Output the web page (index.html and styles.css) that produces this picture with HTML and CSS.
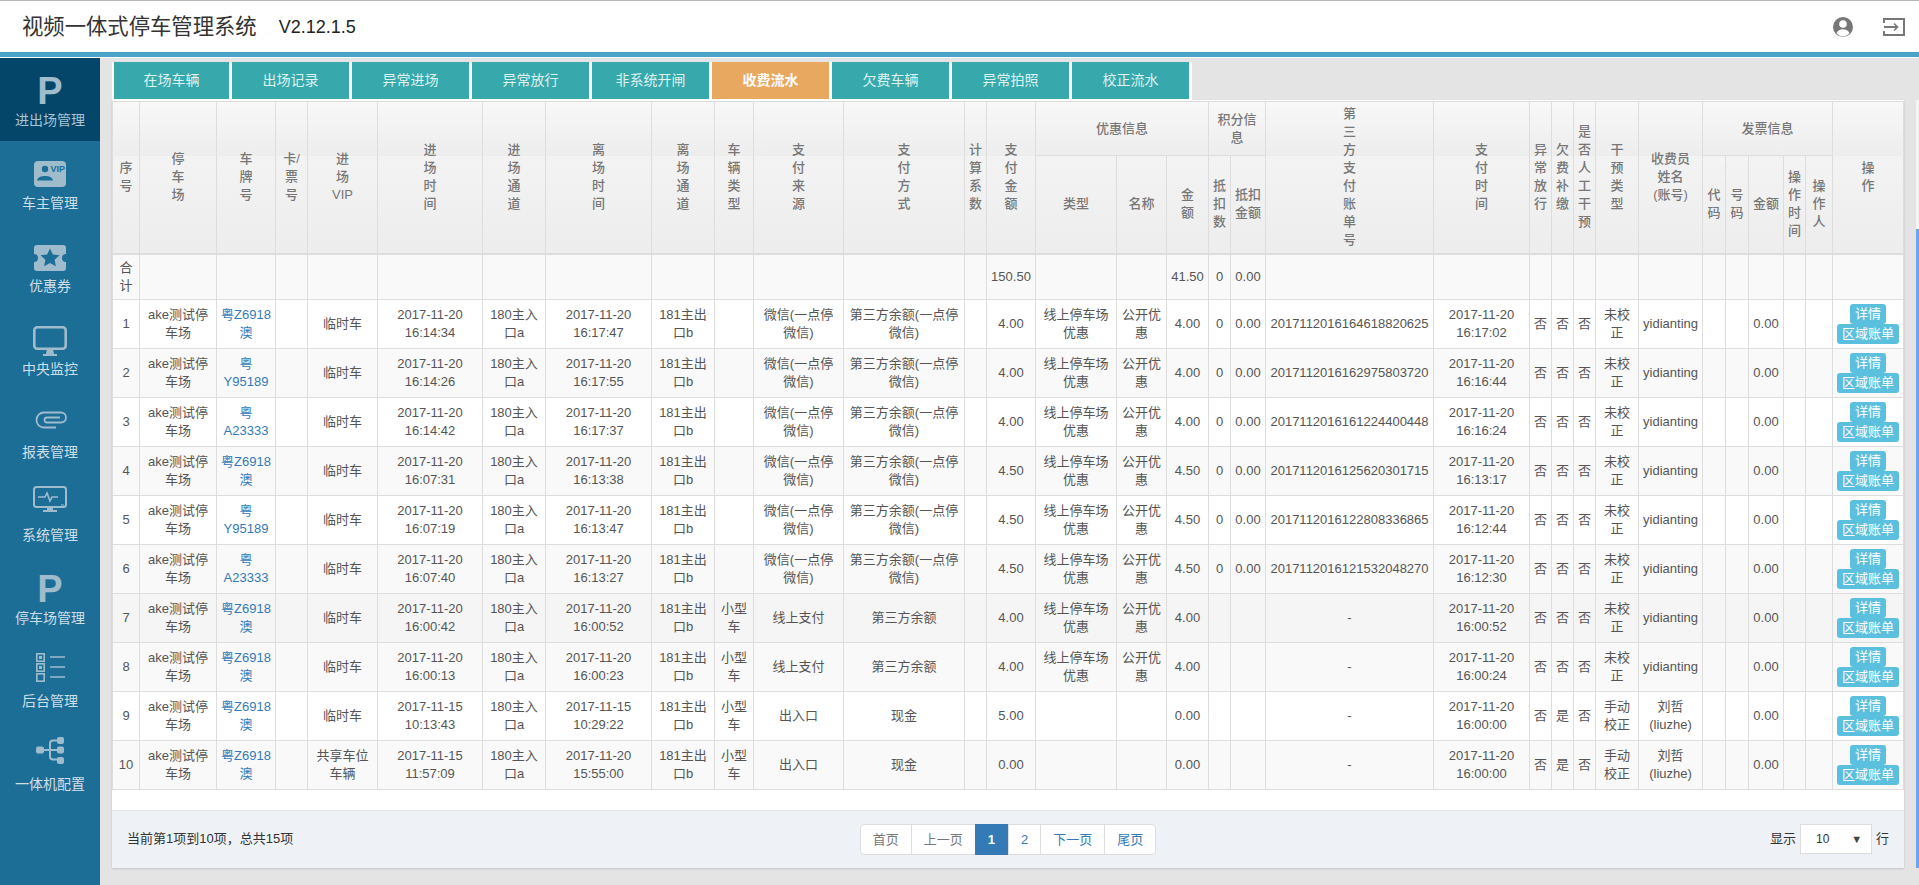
FILE: index.html
```html
<!DOCTYPE html>
<html lang="zh-CN">
<head>
    <meta charset="UTF-8">
    <title>视频一体式停车管理系统</title>
    <link rel="stylesheet" href="styles.css">
</head>
<body>
    <header class="topbar">
        <h1 class="brand">视频一体式停车管理系统</h1>
        <span class="version">V2.12.1.5</span>
        <div class="top-icons">
            <svg class="icon-user" width="20" height="20" viewBox="0 0 20 20"><circle cx="10" cy="10" r="10" fill="#777"/><circle cx="10" cy="7" r="3.8" fill="#fff"/><path d="M3.6 16.2c1-3 3.600-4 6.400-4s5.400 1 6.400 4c-1.600 2-3.800 3.200-6.400 3.200s-4.800-1.200-6.400-3.200z" fill="#fff"/></svg>
            <svg class="icon-exit" width="22" height="18" viewBox="0 0 22 18" fill="none" stroke="#777" stroke-width="2"><path d="M1 5V1h20v16H1v-4"/><path d="M1 9h13"/><path d="M11 5.500 14.500 9 11 12.500" stroke-width="1.600"/></svg>
        </div>
    </header>
    <div class="layout">
        <nav class="sidebar">
            <a class="nav-item active">
                <span class="nav-letter">P</span>
                <span>进出场管理</span>
            </a>
            <a class="nav-item">
                <svg class="nav-icon" viewBox="0 0 40 52"><rect x="4" y="20" width="32" height="26" rx="4" class="fill"/><circle cx="15" cy="28" r="3.200" class="cut"/><path d="M7 39.500c1-3.500 4-4.500 8-4.500s7 1 8 4.500z" class="cut"/><text x="20.500" y="31" class="icon-vip">VIP</text></svg>
                <span>车主管理</span>
            </a>
            <a class="nav-item">
                <svg class="nav-icon" viewBox="0 0 40 52"><path d="M7 21h26a3 3 0 0 1 3 3v6a4 4 0 0 0 0 8v6a3 3 0 0 1-3 3H7a3 3 0 0 1-3-3v-6a4 4 0 0 0 0-8v-6a3 3 0 0 1 3-3z" class="fill"/><path d="m20 24.500 2.900 6 6.600.8-4.900 4.500 1.300 6.500-5.900-3.300-5.900 3.300 1.300-6.500-4.900-4.500 6.600-.8z" class="cut"/></svg>
                <span>优惠券</span>
            </a>
            <a class="nav-item">
                <svg class="nav-icon" viewBox="0 0 40 52"><rect x="4.300" y="20.300" width="31.400" height="21.400" rx="3" class="line line-thick"/><path d="M17 42h6l1 5h3v2H13v-2h3z" class="fill"/></svg>
                <span>中央监控</span>
            </a>
            <a class="nav-item">
                <svg class="nav-icon" viewBox="0 0 40 52"><path d="M26 37.500H14a7.500 7.500 0 0 1 0-15h17a5 5 0 0 1 0 10H17a2.500 2.500 0 0 1 0-5h13" class="line line-clip"/></svg>
                <span>报表管理</span>
            </a>
            <a class="nav-item">
                <svg class="nav-icon" viewBox="0 0 40 52"><rect x="4" y="14" width="32" height="20" rx="2.500" class="line"/><path d="M8 24h7l2-4 3 8 2-4h6" class="line line-thin"/><path d="M31 31.500h3v1h-3z" class="fill"/><path d="M17 34h6v3h4v2H13v-2h4z" class="fill"/></svg>
                <span>系统管理</span>
            </a>
            <a class="nav-item">
                <span class="nav-letter">P</span>
                <span>停车场管理</span>
            </a>
            <a class="nav-item">
                <svg class="nav-icon" viewBox="0 0 40 52"><rect x="6.800" y="14.800" width="7.400" height="7.400" class="line line-thin"/><rect x="9" y="17" width="3" height="3" class="fill"/><rect x="6.800" y="24.800" width="7.400" height="7.400" class="line line-thin"/><rect x="9" y="27" width="3" height="3" class="fill"/><rect x="6.800" y="34.800" width="7.400" height="7.400" class="line line-thin"/><path d="M20 18h15M20 28h15M20 38h15" class="line line-thin"/></svg>
                <span>后台管理</span>
            </a>
            <a class="nav-item">
                <svg class="nav-icon" viewBox="0 0 40 52"><rect x="6" y="24.500" width="8" height="7" rx="2" class="fill"/><rect x="27" y="15" width="7" height="7" rx="2" class="fill"/><rect x="27" y="24.500" width="7" height="7" rx="2" class="fill"/><rect x="27" y="35" width="7" height="7" rx="2" class="fill"/><path d="M13 28h14M28 18.500h-5a3 3 0 0 0-3 3v13a3 3 0 0 0 3 3h5" class="line"/></svg>
                <span>一体机配置</span>
            </a>
        </nav>
        <main class="main">
            <ul class="tabs">
                <li>在场车辆</li>
                <li>出场记录</li>
                <li>异常进场</li>
                <li>异常放行</li>
                <li>非系统开闸</li>
                <li class="current">收费流水</li>
                <li>欠费车辆</li>
                <li>异常拍照</li>
                <li>校正流水</li>
            </ul>
            <section class="panel">
                <table class="data-table">
                    <colgroup>
                        <col class="w27"><col class="w77"><col class="w59"><col class="w32"><col class="w70"><col class="w105"><col class="w63"><col class="w106"><col class="w63"><col class="w39"><col class="w90"><col class="w121"><col class="w22"><col class="w49"><col class="w81"><col class="w50"><col class="w42"><col class="w22"><col class="w35"><col class="w168"><col class="w96"><col class="w22"><col class="w22"><col class="w22"><col class="w43"><col class="w64"><col class="w23"><col class="w23"><col class="w35"><col class="w22"><col class="w27"><col class="w71">
                    </colgroup>
                    <thead>
                        <tr class="head-top">
                            <th rowspan="2">序<br>号</th><th rowspan="2">停<br>车<br>场</th><th rowspan="2">车<br>牌<br>号</th><th rowspan="2">卡/<br>票<br>号</th><th rowspan="2">进<br>场<br>VIP</th><th rowspan="2">进<br>场<br>时<br>间</th><th rowspan="2">进<br>场<br>通<br>道</th><th rowspan="2">离<br>场<br>时<br>间</th><th rowspan="2">离<br>场<br>通<br>道</th><th rowspan="2">车<br>辆<br>类<br>型</th><th rowspan="2">支<br>付<br>来<br>源</th><th rowspan="2">支<br>付<br>方<br>式</th><th rowspan="2">计<br>算<br>系<br>数</th><th rowspan="2">支<br>付<br>金<br>额</th>
                            <th colspan="3">优惠信息</th><th colspan="2">积分信<br>息</th>
                            <th rowspan="2">第<br>三<br>方<br>支<br>付<br>账<br>单<br>号</th><th rowspan="2">支<br>付<br>时<br>间</th><th rowspan="2">异<br>常<br>放<br>行</th><th rowspan="2">欠<br>费<br>补<br>缴</th><th rowspan="2">是<br>否<br>人<br>工<br>干<br>预</th><th rowspan="2">干<br>预<br>类<br>型</th><th rowspan="2">收费员<br>姓名<br>(账号)</th>
                            <th colspan="5">发票信息</th><th rowspan="2">操<br>作</th>
                        </tr>
                        <tr class="head-sub">
                            <th>类型</th><th>名称</th><th>金<br>额</th><th>抵<br>扣<br>数</th><th>抵扣<br>金额</th><th>代<br>码</th><th>号<br>码</th><th>金额</th><th>操<br>作<br>时<br>间</th><th>操<br>作<br>人</th>
                        </tr>
                    </thead>
                    <tbody>
                        <tr class="total"><td>合计</td><td></td><td></td><td></td><td></td><td></td><td></td><td></td><td></td><td></td><td></td><td></td><td></td><td>150.50</td><td></td><td></td><td>41.50</td><td>0</td><td>0.00</td><td></td><td></td><td></td><td></td><td></td><td></td><td></td><td></td><td></td><td></td><td></td><td></td><td></td></tr>
                        <tr><td>1</td><td>ake测试停车场</td><td><a>粤Z6918澳</a></td><td></td><td>临时车</td><td>2017-11-20 16:14:34</td><td>180主入口a</td><td>2017-11-20 16:17:47</td><td>181主出口b</td><td></td><td>微信(一点停微信)</td><td>第三方余额(一点停微信)</td><td></td><td>4.00</td><td>线上停车场优惠</td><td>公开优惠</td><td>4.00</td><td>0</td><td>0.00</td><td>2017112016164618820625</td><td>2017-11-20 16:17:02</td><td>否</td><td>否</td><td>否</td><td>未校正</td><td>yidianting</td><td></td><td></td><td>0.00</td><td></td><td></td><td><button class="btn">详情</button><button class="btn">区域账单</button></td></tr>
                        <tr><td>2</td><td>ake测试停车场</td><td><a>粤Y95189</a></td><td></td><td>临时车</td><td>2017-11-20 16:14:26</td><td>180主入口a</td><td>2017-11-20 16:17:55</td><td>181主出口b</td><td></td><td>微信(一点停微信)</td><td>第三方余额(一点停微信)</td><td></td><td>4.00</td><td>线上停车场优惠</td><td>公开优惠</td><td>4.00</td><td>0</td><td>0.00</td><td>2017112016162975803720</td><td>2017-11-20 16:16:44</td><td>否</td><td>否</td><td>否</td><td>未校正</td><td>yidianting</td><td></td><td></td><td>0.00</td><td></td><td></td><td><button class="btn">详情</button><button class="btn">区域账单</button></td></tr>
                        <tr><td>3</td><td>ake测试停车场</td><td><a>粤A23333</a></td><td></td><td>临时车</td><td>2017-11-20 16:14:42</td><td>180主入口a</td><td>2017-11-20 16:17:37</td><td>181主出口b</td><td></td><td>微信(一点停微信)</td><td>第三方余额(一点停微信)</td><td></td><td>4.00</td><td>线上停车场优惠</td><td>公开优惠</td><td>4.00</td><td>0</td><td>0.00</td><td>2017112016161224400448</td><td>2017-11-20 16:16:24</td><td>否</td><td>否</td><td>否</td><td>未校正</td><td>yidianting</td><td></td><td></td><td>0.00</td><td></td><td></td><td><button class="btn">详情</button><button class="btn">区域账单</button></td></tr>
                        <tr><td>4</td><td>ake测试停车场</td><td><a>粤Z6918澳</a></td><td></td><td>临时车</td><td>2017-11-20 16:07:31</td><td>180主入口a</td><td>2017-11-20 16:13:38</td><td>181主出口b</td><td></td><td>微信(一点停微信)</td><td>第三方余额(一点停微信)</td><td></td><td>4.50</td><td>线上停车场优惠</td><td>公开优惠</td><td>4.50</td><td>0</td><td>0.00</td><td>2017112016125620301715</td><td>2017-11-20 16:13:17</td><td>否</td><td>否</td><td>否</td><td>未校正</td><td>yidianting</td><td></td><td></td><td>0.00</td><td></td><td></td><td><button class="btn">详情</button><button class="btn">区域账单</button></td></tr>
                        <tr><td>5</td><td>ake测试停车场</td><td><a>粤Y95189</a></td><td></td><td>临时车</td><td>2017-11-20 16:07:19</td><td>180主入口a</td><td>2017-11-20 16:13:47</td><td>181主出口b</td><td></td><td>微信(一点停微信)</td><td>第三方余额(一点停微信)</td><td></td><td>4.50</td><td>线上停车场优惠</td><td>公开优惠</td><td>4.50</td><td>0</td><td>0.00</td><td>2017112016122808336865</td><td>2017-11-20 16:12:44</td><td>否</td><td>否</td><td>否</td><td>未校正</td><td>yidianting</td><td></td><td></td><td>0.00</td><td></td><td></td><td><button class="btn">详情</button><button class="btn">区域账单</button></td></tr>
                        <tr><td>6</td><td>ake测试停车场</td><td><a>粤A23333</a></td><td></td><td>临时车</td><td>2017-11-20 16:07:40</td><td>180主入口a</td><td>2017-11-20 16:13:27</td><td>181主出口b</td><td></td><td>微信(一点停微信)</td><td>第三方余额(一点停微信)</td><td></td><td>4.50</td><td>线上停车场优惠</td><td>公开优惠</td><td>4.50</td><td>0</td><td>0.00</td><td>2017112016121532048270</td><td>2017-11-20 16:12:30</td><td>否</td><td>否</td><td>否</td><td>未校正</td><td>yidianting</td><td></td><td></td><td>0.00</td><td></td><td></td><td><button class="btn">详情</button><button class="btn">区域账单</button></td></tr>
                        <tr class="hover"><td>7</td><td>ake测试停车场</td><td><a>粤Z6918澳</a></td><td></td><td>临时车</td><td>2017-11-20 16:00:42</td><td>180主入口a</td><td>2017-11-20 16:00:52</td><td>181主出口b</td><td>小型车</td><td>线上支付</td><td>第三方余额</td><td></td><td>4.00</td><td>线上停车场优惠</td><td>公开优惠</td><td>4.00</td><td></td><td></td><td>-</td><td>2017-11-20 16:00:52</td><td>否</td><td>否</td><td>否</td><td>未校正</td><td>yidianting</td><td></td><td></td><td>0.00</td><td></td><td></td><td><button class="btn">详情</button><button class="btn">区域账单</button></td></tr>
                        <tr><td>8</td><td>ake测试停车场</td><td><a>粤Z6918澳</a></td><td></td><td>临时车</td><td>2017-11-20 16:00:13</td><td>180主入口a</td><td>2017-11-20 16:00:23</td><td>181主出口b</td><td>小型车</td><td>线上支付</td><td>第三方余额</td><td></td><td>4.00</td><td>线上停车场优惠</td><td>公开优惠</td><td>4.00</td><td></td><td></td><td>-</td><td>2017-11-20 16:00:24</td><td>否</td><td>否</td><td>否</td><td>未校正</td><td>yidianting</td><td></td><td></td><td>0.00</td><td></td><td></td><td><button class="btn">详情</button><button class="btn">区域账单</button></td></tr>
                        <tr><td>9</td><td>ake测试停车场</td><td><a>粤Z6918澳</a></td><td></td><td>临时车</td><td>2017-11-15 10:13:43</td><td>180主入口a</td><td>2017-11-15 10:29:22</td><td>181主出口b</td><td>小型车</td><td>出入口</td><td>现金</td><td></td><td>5.00</td><td></td><td></td><td>0.00</td><td></td><td></td><td>-</td><td>2017-11-20 16:00:00</td><td>否</td><td>是</td><td>否</td><td>手动校正</td><td>刘哲<br>(liuzhe)</td><td></td><td></td><td>0.00</td><td></td><td></td><td><button class="btn">详情</button><button class="btn">区域账单</button></td></tr>
                        <tr><td>10</td><td>ake测试停车场</td><td><a>粤Z6918澳</a></td><td></td><td>共享车位车辆</td><td>2017-11-15 11:57:09</td><td>180主入口a</td><td>2017-11-20 15:55:00</td><td>181主出口b</td><td>小型车</td><td>出入口</td><td>现金</td><td></td><td>0.00</td><td></td><td></td><td>0.00</td><td></td><td></td><td>-</td><td>2017-11-20 16:00:00</td><td>否</td><td>是</td><td>否</td><td>手动校正</td><td>刘哲<br>(liuzhe)</td><td></td><td></td><td>0.00</td><td></td><td></td><td><button class="btn">详情</button><button class="btn">区域账单</button></td></tr>
                    </tbody>
                </table>
                <footer class="table-foot">
                    <div class="page-info">当前第1项到10项，总共15项</div>
                    <ul class="pagination">
                        <li class="off">首页</li>
                        <li class="off">上一页</li>
                        <li class="on">1</li>
                        <li>2</li>
                        <li>下一页</li>
                        <li>尾页</li>
                    </ul>
                    <div class="page-size">
                        <span>显示</span>
                        <div class="size-select"><span>10</span><i>▼</i></div>
                        <span>行</span>
                    </div>
                </footer>
            </section>
        </main>
    </div>
    <div class="scroll-track"><div class="scroll-thumb"></div></div>
</body>
</html>
```

FILE: styles.css
```css
* {
    box-sizing: border-box;
}
html, body {
    height: 885px;
    margin: 0;
    overflow: hidden;
}
body {
    background-color: #e4e4e4;
    color: #333;
    font: 13px/18px "Liberation Sans", "Noto Sans CJK SC", sans-serif;
}
ul {
    list-style: none;
    margin: 0;
    padding: 0;
}

/* top bar */
.topbar {
    display: flex;
    align-items: center;
    height: 58px;
    padding: 0 14px 5px 22px;
    background-color: #fff;
    border-top: 1px solid #b8b8b8;
    border-bottom: 1px solid #fff;
    box-shadow: inset 0 -5px 0 #4ba3c7;
}
.brand {
    margin: 0;
    font-size: 21.33px;
    font-weight: normal;
    line-height: 28px;
}
.version {
    margin-left: 22px;
    font-size: 18px;
    color: #222;
}
.top-icons {
    display: flex;
    align-items: center;
    gap: 30px;
    margin-left: auto;
}

/* left menu */
.layout {
    display: flex;
    height: 827px;
}
.sidebar {
    flex: 0 0 100px;
    background-color: #1c6e97;
}
.nav-item {
    display: block;
    height: 83px;
    text-align: center;
    font-size: 14px;
    line-height: 20px;
    color: #cfdfe8;
}
.nav-item.active {
    background-color: #03466a;
    color: #a9c4d4;
}
.nav-icon {
    display: block;
    width: 40px;
    height: 52px;
    margin: 0 auto;
}
.nav-letter {
    display: block;
    height: 52px;
    padding-top: 15px;
    color: #9fbccd;
    font-size: 38px;
    font-weight: bold;
    line-height: 37px;
}
.nav-icon .fill {
    fill: #9fbccd;
}
.nav-icon .cut {
    fill: #1c6e97;
}
.nav-icon .line {
    fill: none;
    stroke: #9fbccd;
    stroke-width: 2;
}
.nav-icon .line-thick {
    stroke-width: 2.6;
}
.nav-icon .line-clip {
    stroke-width: 1.8;
}
.nav-icon .line-thin {
    stroke-width: 1.6;
}
.icon-vip {
    fill: #1c6e97;
    font: bold 9px "Liberation Sans", sans-serif;
}

/* content */
.main {
    flex: 1;
    padding: 4px 15px 0 12px;
}
.tabs {
    display: inline-flex;
    gap: 3px;
    height: 38px;
    padding: 0 3px 1px 2px;
    background-color: #fff;
    vertical-align: top;
}
.tabs li {
    width: 117px;
    background-color: #37a9ad;
    color: #dff1f1;
    font-size: 14px;
    line-height: 37px;
    text-align: center;
}
.tabs li:first-child {
    width: 115px;
}
.tabs li.current {
    background-color: #e9a85f;
    color: #fff;
    font-weight: bold;
}
.panel {
    background-color: #fff;
    padding-top: 1px;
    box-shadow: 0 1px 2px rgba(0, 0, 0, 0.15);
}

/* table */
.data-table {
    width: 1792px;
    border-collapse: collapse;
    table-layout: fixed;
    color: #555;
    text-align: center;
}
.data-table th,
.data-table td {
    padding: 4px;
    border: 1px solid #ddd;
    vertical-align: middle;
}
.data-table th {
    padding: 0;
    color: #777;
    font-weight: 500;
}
.data-table thead {
    border-bottom: 2px solid #ddd;
}
.head-top {
    height: 54px;
}
.head-sub {
    height: 98px;
}
.head-top th {
    background: linear-gradient(#f8f8f8, #ededed) 0 0 / 100% 54px no-repeat,
                linear-gradient(#f3f3f3, #ededed) 0 54px / 100% 98px no-repeat;
}
.head-sub th {
    background: linear-gradient(#f3f3f3, #ededed);
}
.data-table tbody tr {
    height: 49px;
}
.data-table tbody tr.total {
    height: 44px;
}
.data-table tbody tr:nth-child(odd) {
    background-color: #f9f9f9;
}
.data-table tbody tr.hover {
    background-color: #f5f5f5;
}
.data-table a {
    color: #337ab7;
}
.btn {
    display: block;
    height: 20px;
    margin: 0 auto;
    padding: 0 5px;
    border: 0;
    border-radius: 3px;
    background-color: #5bc0de;
    color: #fff;
    font: inherit;
    line-height: 20px;
    white-space: nowrap;
}
.w22 { width: 22px; }
.w23 { width: 23px; }
.w27 { width: 27px; }
.w32 { width: 32px; }
.w35 { width: 35px; }
.w39 { width: 39px; }
.w42 { width: 42px; }
.w43 { width: 43px; }
.w49 { width: 49px; }
.w50 { width: 50px; }
.w59 { width: 59px; }
.w63 { width: 63px; }
.w64 { width: 64px; }
.w70 { width: 70px; }
.w71 { width: 71px; }
.w77 { width: 77px; }
.w81 { width: 81px; }
.w90 { width: 90px; }
.w96 { width: 96px; }
.w105 { width: 105px; }
.w106 { width: 106px; }
.w121 { width: 121px; }
.w168 { width: 168px; }

/* table footer */
.table-foot {
    display: grid;
    grid-template-columns: 1fr auto 1fr;
    align-items: center;
    height: 58px;
    margin-top: 20px;
    padding: 0 15px;
    background-color: #eef2f7;
    border-top: 1px solid #e2e4e8;
}
.pagination {
    display: flex;
    height: 31px;
    background-color: #fff;
    border: 1px solid #ddd;
    border-radius: 4px;
    line-height: 29px;
}
.pagination li {
    padding: 0 12px;
    border-left: 1px solid #ddd;
    color: #337ab7;
}
.pagination li:first-child {
    border-left: 0;
}
.pagination li.off {
    color: #777;
}
.pagination li.on {
    margin: -1px 0;
    border-left: 0;
    padding: 1px 13px;
    background-color: #337ab7;
    color: #fff;
    font-weight: bold;
}
.page-size {
    display: flex;
    align-items: center;
    justify-content: flex-end;
    gap: 4px;
}
.size-select {
    display: flex;
    align-items: center;
    justify-content: space-between;
    width: 72px;
    height: 30px;
    padding: 0 9px 0 15px;
    background-color: #fff;
    border: 1px solid #ddd;
    font-size: 12px;
}
.size-select i {
    font-style: normal;
    font-size: 11px;
    color: #444;
}

/* thin scrollbar at the window edge */
.scroll-track {
    position: absolute;
    top: 100px;
    right: 0;
    width: 3px;
    height: 768px;
    background-color: #f4f4f4;
}
.scroll-thumb {
    height: 639px;
    margin-top: 129px;
    background-color: #6ea4ec;
}
```
